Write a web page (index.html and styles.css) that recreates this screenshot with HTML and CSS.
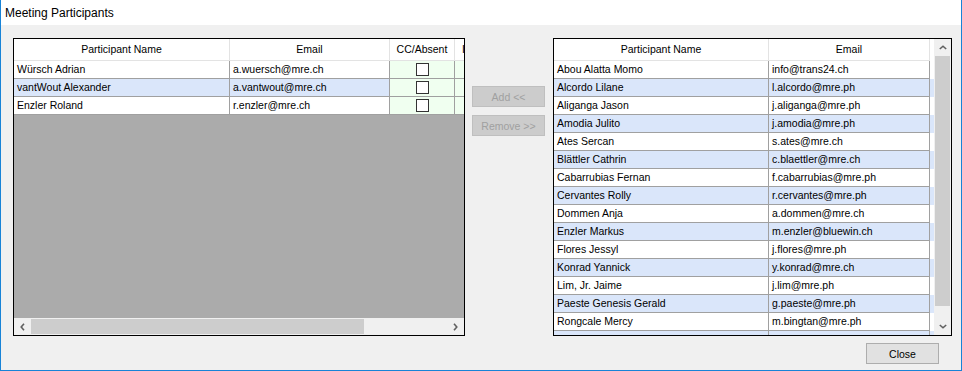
FILE: index.html
```html
<!DOCTYPE html>
<html>

<head>
  <meta http-equiv="Content-Type" content="text/html; charset=utf-8">
  <link rel="stylesheet" href="styles.css">
</head>

<body>

  <div class="window">
    <div class="titlebar">Meeting Participants</div>

    <div class="content">
      <div class="main">

        <!-- selected participants -->
        <div class="grid grid-left">
          <div class="grid-view">
            <div class="row head">
              <div class="cell c-name">Participant Name</div>
              <div class="cell c-mail">Email</div>
              <div class="cell c-cc">CC/Absent</div>
              <div class="cell c-extra">Info</div>
            </div>
            <div class="row">
              <div class="cell c-name">Würsch Adrian</div>
              <div class="cell c-mail">a.wuersch@mre.ch</div>
              <div class="cell c-cc check-cell"><span class="checkbox"></span></div>
              <div class="cell c-extra check-cell"></div>
            </div>
            <div class="row alt">
              <div class="cell c-name">vantWout Alexander</div>
              <div class="cell c-mail">a.vantwout@mre.ch</div>
              <div class="cell c-cc check-cell"><span class="checkbox"></span></div>
              <div class="cell c-extra check-cell"></div>
            </div>
            <div class="row">
              <div class="cell c-name">Enzler Roland</div>
              <div class="cell c-mail">r.enzler@mre.ch</div>
              <div class="cell c-cc check-cell"><span class="checkbox"></span></div>
              <div class="cell c-extra check-cell"></div>
            </div>
          </div>
          <div class="hscroll">
            <span class="arrow-h">
              <svg width="5" height="8" viewBox="0 0 5 8"><path d="M4 0.8 L1.2 4 L4 7.2" fill="none" stroke="#606060" stroke-width="1.6"/></svg>
            </span>
            <span class="hthumb"></span>
            <span class="htrack"></span>
            <span class="arrow-h">
              <svg width="5" height="8" viewBox="0 0 5 8"><path d="M1 0.8 L3.8 4 L1 7.2" fill="none" stroke="#606060" stroke-width="1.6"/></svg>
            </span>
          </div>
        </div>

        <div class="actions">
          <button class="btn" disabled>Add &lt;&lt;</button>
          <button class="btn" disabled>Remove &gt;&gt;</button>
        </div>

        <!-- all people -->
        <div class="grid grid-right">
          <div class="grid-view">
            <div class="row head">
              <div class="cell r-name">Participant Name</div>
              <div class="cell r-mail">Email</div>
            </div>
            <div class="row"><div class="cell r-name">Abou Alatta Momo</div><div class="cell r-mail">info@trans24.ch</div></div>
            <div class="row alt"><div class="cell r-name">Alcordo Lilane</div><div class="cell r-mail">l.alcordo@mre.ph</div></div>
            <div class="row"><div class="cell r-name">Aliganga Jason</div><div class="cell r-mail">j.aliganga@mre.ph</div></div>
            <div class="row alt"><div class="cell r-name">Amodia Julito</div><div class="cell r-mail">j.amodia@mre.ph</div></div>
            <div class="row"><div class="cell r-name">Ates Sercan</div><div class="cell r-mail">s.ates@mre.ch</div></div>
            <div class="row alt"><div class="cell r-name">Blättler Cathrin</div><div class="cell r-mail">c.blaettler@mre.ch</div></div>
            <div class="row"><div class="cell r-name">Cabarrubias Fernan</div><div class="cell r-mail">f.cabarrubias@mre.ph</div></div>
            <div class="row alt"><div class="cell r-name">Cervantes Rolly</div><div class="cell r-mail">r.cervantes@mre.ph</div></div>
            <div class="row"><div class="cell r-name">Dommen Anja</div><div class="cell r-mail">a.dommen@mre.ch</div></div>
            <div class="row alt"><div class="cell r-name">Enzler Markus</div><div class="cell r-mail">m.enzler@bluewin.ch</div></div>
            <div class="row"><div class="cell r-name">Flores Jessyl</div><div class="cell r-mail">j.flores@mre.ph</div></div>
            <div class="row alt"><div class="cell r-name">Konrad Yannick</div><div class="cell r-mail">y.konrad@mre.ch</div></div>
            <div class="row"><div class="cell r-name">Lim, Jr. Jaime</div><div class="cell r-mail">j.lim@mre.ph</div></div>
            <div class="row alt"><div class="cell r-name">Paeste Genesis Gerald</div><div class="cell r-mail">g.paeste@mre.ph</div></div>
            <div class="row"><div class="cell r-name">Rongcale Mercy</div><div class="cell r-mail">m.bingtan@mre.ph</div></div>
            <div class="row alt"><div class="cell r-name">Sabado Fernando</div><div class="cell r-mail">f.sabado@mre.ph</div></div>
          </div>
          <div class="vscroll">
            <span class="arrow-v">
              <svg width="8" height="5" viewBox="0 0 8 5"><path d="M0.8 4 L4 1.2 L7.2 4" fill="none" stroke="#606060" stroke-width="1.6"/></svg>
            </span>
            <span class="vthumb"></span>
            <span class="vtrack"></span>
            <span class="arrow-v">
              <svg width="8" height="5" viewBox="0 0 8 5"><path d="M0.8 1 L4 3.8 L7.2 1" fill="none" stroke="#606060" stroke-width="1.6"/></svg>
            </span>
          </div>
        </div>

      </div>

      <div class="footer">
        <button class="btn btn-close">Close</button>
      </div>
    </div>
  </div>

</body>

</html>
```

FILE: styles.css
```css
body {
  margin: 0;
  font-family: "Liberation Sans", Arial, sans-serif;
  font-size: 10.5px;
  color: #000;
}

.window {
  width: 962px;
  height: 371px;
  box-sizing: border-box;
  border: 1px solid #1883d7;
  border-top: none;
  background-color: #f0f0f0;
  display: flex;
  flex-direction: column;
}

.titlebar {
  height: 25px;
  line-height: 26px;
  padding-left: 4px;
  background-color: #fff;
  font-size: 12px;
}

.content {
  padding: 13px 0 0 12px;
}

.main {
  display: flex;
  height: 298px;
}

.grid {
  box-sizing: border-box;
  border: 1px solid #000;
  display: flex;
}

.grid-left {
  width: 452px;
  flex-direction: column;
}

.grid-right {
  width: 399px;
}

.grid-view {
  flex: 1;
  background-color: #ababab;
  overflow: hidden;
}

.row {
  display: flex;
  height: 18px;
  background-color: #fff;
  white-space: nowrap;
}

.row.alt {
  background-color: #dae6fa;
}

.cell {
  flex: none;
  box-sizing: border-box;
  height: 18px;
  line-height: 17px;
  padding-left: 3px;
  overflow: hidden;
  border-right: 1px solid #a0a0a0;
  border-bottom: 1px solid #a0a0a0;
}

.row.head {
  height: 22px;
}

.head .cell {
  height: 22px;
  line-height: 21px;
  padding-left: 0;
  text-align: center;
  border-right-color: #e3e3e3;
  border-bottom-color: #e3e3e3;
}

.c-name {
  width: 216px;
}

.c-mail {
  width: 160px;
}

.c-cc {
  width: 65px;
}

.c-extra {
  width: 60px;
}

.head .c-extra {
  text-align: left;
  padding-left: 7px;
}

.r-name {
  width: 215px;
}

.r-mail {
  width: 161px;
}

.check-cell {
  background-color: #f0fff0;
  display: flex;
  justify-content: center;
  align-items: center;
  padding-left: 0;
}

.checkbox {
  width: 13px;
  height: 13px;
  box-sizing: border-box;
  border: 1px solid #333;
  background-color: #fff;
}

/* scrollbars */

.hscroll {
  flex: none;
  height: 17px;
  display: flex;
  align-items: center;
  background-color: #f0f0f0;
}

.arrow-h {
  width: 17px;
  height: 17px;
  display: flex;
  justify-content: center;
  align-items: center;
}

.hthumb {
  width: 333px;
  height: 15px;
  background-color: #cdcdcd;
}

.htrack {
  flex: 1;
}

.vscroll {
  flex: none;
  width: 17px;
  display: flex;
  flex-direction: column;
  align-items: center;
  background-color: #f0f0f0;
}

.arrow-v {
  width: 17px;
  height: 17px;
  display: flex;
  justify-content: center;
  align-items: center;
}

.vthumb {
  width: 15px;
  height: 250px;
  background-color: #cdcdcd;
}

.vtrack {
  flex: 1;
}

/* buttons */

.actions {
  width: 73px;
  padding: 48px 8px 0 7px;
  display: flex;
  flex-direction: column;
  gap: 8px;
}

.btn {
  width: 73px;
  height: 21px;
  box-sizing: border-box;
  padding: 0;
  font-family: "Liberation Sans", Arial, sans-serif;
  font-size: 10.5px;
  color: #000;
  background-color: #e1e1e1;
  border: 1px solid #adadad;
}

.btn:disabled {
  color: #a0a0a0;
  background-color: #cccccc;
  border-color: #bfbfbf;
}

.footer {
  display: flex;
  justify-content: flex-end;
  padding: 7px 22px 0 0;
}
```
